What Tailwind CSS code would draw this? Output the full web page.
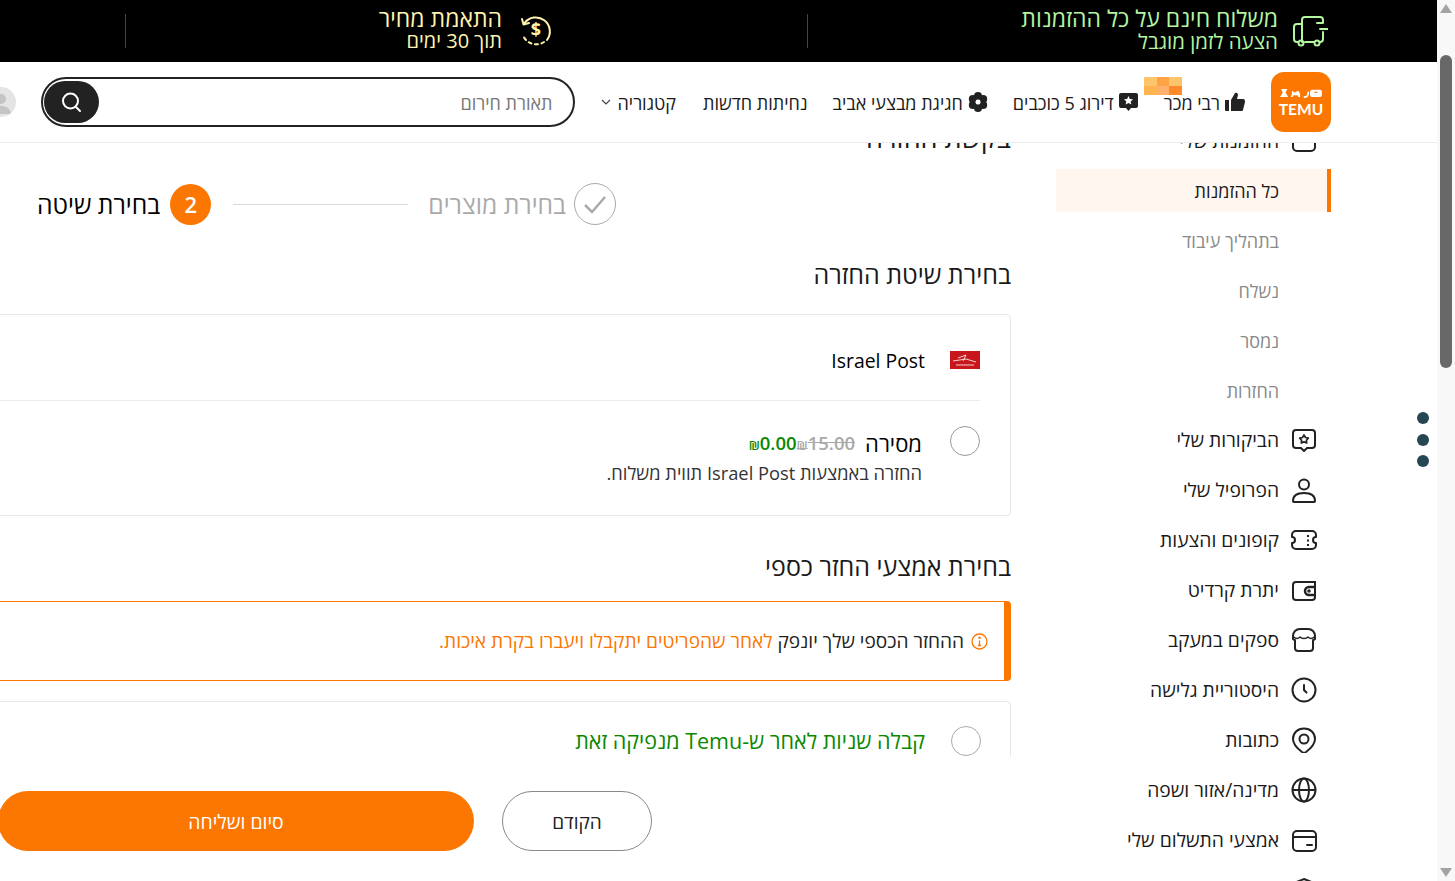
<!DOCTYPE html>
<html lang="he" dir="rtl">
<head>
    <meta charset="UTF-8" />
    <title>בקשת החזרה</title>
    <script src="https://cdn.jsdelivr.net/npm/@tailwindcss/browser@4"></script>
</head>
<body class="h-[881px] overflow-hidden bg-white text-[#1a1a1a] font-['Open_Sans','Liberation_Sans',sans-serif]">
<div class="flex h-[881px] w-[1455px]" dir="ltr">
    <div class="relative h-[881px] w-[1437px] shrink-0 overflow-hidden" dir="rtl">
        <!-- banner -->
        <div class="relative z-20 flex h-[62px] items-center bg-black pr-[109px]">
            <div class="flex w-[520px] items-center gap-[14px]">
                <svg class="mb-[2px] h-[36px] w-[36px] shrink-0" viewBox="0 0 36 36" fill="none" stroke="#b4f5a0" stroke-width="2" stroke-linecap="round" stroke-linejoin="round"><path d="M10 30V8a3 3 0 0 1 3-3h15a3 3 0 0 1 3 3v3h-6"/><path d="M28 17h8M31 20v7a3 3 0 0 1-3 3"/><path d="M10 12H5a3 3 0 0 0-3 3v12a3 3 0 0 0 3 3h1"/><path d="M13 30h9"/><circle cx="9" cy="31" r="2.500"/><circle cx="25" cy="31" r="2.500"/></svg>
                <div class="pb-[4px] whitespace-nowrap text-[#b4f5a0]">
                    <div class="text-[23px] leading-[24px]">משלוח חינם על כל ההזמנות</div>
                    <div class="text-[20.500px] leading-[22px]">הצעה לזמן מוגבל</div>
                </div>
            </div>
            <div class="h-[34px] w-px bg-[#444]"></div>
            <div class="flex w-[681px] items-center gap-[17px] pr-[254px]">
                <svg class="mb-[2px] h-[34px] w-[34px] shrink-0" viewBox="0 0 34 34" fill="none" stroke="#fff3b0" stroke-width="2" stroke-linecap="round" stroke-linejoin="round"><path d="M5.500 10A14 14 0 1 1 28 27"/><path d="M25 29A14 14 0 0 1 4 22" stroke-dasharray="3 3.500"/><path d="M3 6l1.500 5.500L10 10"/><text x="17" y="23" text-anchor="middle" font-size="18" font-weight="700" fill="#fff3b0" stroke="none">$</text></svg>
                <div class="pb-[4px] whitespace-nowrap text-[#fff3b0]">
                    <div class="text-[23px] leading-[24px]">התאמת מחיר</div>
                    <div class="text-[20px] leading-[22px]">תוך 30 ימים</div>
                </div>
            </div>
            <div class="h-[34px] w-px bg-[#444]"></div>
        </div>

        <!-- header -->
        <div class="relative z-20 flex h-[81px] items-center border-b border-[#ebebeb] bg-white pr-[106px] text-[18px] font-medium whitespace-nowrap">
            <div class="relative mb-[1px] flex h-[60px] w-[60px] shrink-0 flex-col items-center justify-center rounded-[13px] bg-[#fb7701] text-white" dir="ltr">
                <svg class="h-[10px] w-[44px]" viewBox="0 0 46 11" fill="#fff"><path d="M1 1h7L6 5l3 5H0l3-5zM13 3l3 2 4-2 2 3v4h-2l-1-2h-4l-1 2h-2l1-4zM26 9c3 0 4-1 4-5h2c0 5-2 7-6 7zM35 2h9q2 0 2 2v4q0 2-2 2h-9q-2 0-2-2V4q0-2 2-2zm2 2q2 3 5 0z"/></svg>
                <div class="mt-[4px] font-['Lato',sans-serif] text-[15.500px] leading-[14px] font-bold">TEMU</div>
            </div>
            <div class="mr-[26px] flex items-center gap-[4px]">
                <svg class="h-[20px] w-[21px]" viewBox="0 0 21 20" fill="#222"><path d="M1 8h4v11H2a1 1 0 0 1-1-1zM7 8l4-7c2-1 3 1 3 2l-1 4h6c2 0 2 2 2 3l-2 8c-.3 1-1 1-2 1H7z"/></svg>
                <span class="pt-[2px]">רבי מכר</span>
            </div>
            <div class="absolute top-[15px] right-[255px] grid h-[18px] w-[38px] grid-cols-3 grid-rows-2">
                <i class="bg-[#fec46b]"></i><i class="bg-[#ffa444]"></i><i class="bg-[#fec46b]"></i>
                <i class="bg-[#ff8a2a]"></i><i class="bg-[#ffb06c]"></i><i class="bg-[#ffb44f]"></i>
            </div>
            <div class="mr-[25px] flex items-center gap-[4px]">
                <svg class="h-[20px] w-[21px]" viewBox="0 0 21 20"><path fill="#222" d="M3 1h15a2 2 0 0 1 2 2v11a2 2 0 0 1-2 2h-5l-2.500 3L8 16H3a2 2 0 0 1-2-2V3a2 2 0 0 1 2-2z"/><path fill="#fff" d="M10.500 4l1.400 2.900 3.100.4-2.300 2.100.6 3.100-2.800-1.500-2.800 1.500.6-3.100L6 7.300l3.100-.4z"/></svg>
                <span class="pt-[2px]">דירוג 5 כוכבים</span>
            </div>
            <div class="mr-[25px] flex items-center gap-[5px]">
                <svg class="h-[20px] w-[20px]" viewBox="0 0 20 20"><g fill="#222"><circle cx="10" cy="4" r="4"/><circle cx="10" cy="16" r="4"/><circle cx="4.800" cy="7" r="4"/><circle cx="15.200" cy="7" r="4"/><circle cx="4.800" cy="13" r="4"/><circle cx="15.200" cy="13" r="4"/></g><circle cx="10" cy="10" r="2.500" fill="#fff"/></svg>
                <span class="pt-[2px]">חגיגת מבצעי אביב</span>
            </div>
            <div class="mr-[25px] pt-[2px]">נחיתות חדשות</div>
            <div class="mr-[27px] flex items-center gap-[6px]">
                <span class="pt-[2px]">קטגוריה</span>
                <svg class="h-[8px] w-[12px]" viewBox="0 0 12 8" fill="none" stroke="#444" stroke-width="1.200"><path d="M2 2l4 4 4-4"/></svg>
            </div>
            <div class="mr-[25px] flex h-[50px] w-[534px] shrink-0 items-center justify-between rounded-[25px] border-2 border-[#222] pr-[20px] pl-[1px]">
                <span class="pt-[2px] font-normal text-[#777]">תאורת חירום</span>
                <div class="flex h-[42px] w-[55px] items-center justify-center rounded-[21px] bg-[#222]">
                    <svg class="h-[24px] w-[24px]" viewBox="0 0 24 24" fill="none" stroke="#fff" stroke-width="2" stroke-linecap="round"><circle cx="11.500" cy="11" r="7.500"/><path d="M17 17l4 4"/></svg>
                </div>
            </div>
            <div class="mr-[25px] h-[30px] w-[30px] shrink-0 overflow-hidden rounded-full bg-[#e4e4e4]">
                <svg class="h-[30px] w-[30px]" viewBox="0 0 30 30" fill="#c4c4c4"><circle cx="15" cy="12" r="5"/><path d="M5 27c1-6 5-8 10-8s9 2 10 8z"/></svg>
            </div>
        </div>

        <!-- page content, scrolled -->
        <div class="-mt-[27px] flex items-start pr-[106px]">
            <!-- sidebar -->
            <div class="w-[275px] shrink-0 text-[19.300px] whitespace-nowrap">
                <div class="flex h-[50px] items-center gap-[12px] pr-[14px]">
                    <svg class="h-[26px] w-[26px] shrink-0" viewBox="0 0 26 26" fill="none" stroke="#222" stroke-width="2"><rect x="2" y="4" width="22" height="19" rx="4"/><path d="M9 12h8"/></svg>
                    <span>ההזמנות שלי</span>
                </div>
                <div class="flex h-[50px] items-center pb-[1px]">
                    <div class="flex h-[43px] w-full items-center border-r-4 border-[#fb7701] bg-[#fff6f0] pt-[2px] pr-[48px] text-[18px]">כל ההזמנות</div>
                </div>
                <div class="flex h-[50px] items-center pr-[52px] text-[18px] text-[#8a8a8a]">בתהליך עיבוד</div>
                <div class="flex h-[50px] items-center pr-[52px] text-[18px] text-[#8a8a8a]">נשלח</div>
                <div class="flex h-[50px] items-center pr-[52px] text-[18px] text-[#8a8a8a]">נמסר</div>
                <div class="flex h-[49px] items-center pt-[2px] pr-[52px] text-[18px] text-[#8a8a8a]">החזרות</div>
                <div class="flex h-[50px] items-center gap-[12px] pr-[14px]">
                    <svg class="h-[26px] w-[26px] shrink-0" viewBox="0 0 26 26" fill="none" stroke="#222" stroke-width="2" stroke-linejoin="round"><path d="M5 3h16a3 3 0 0 1 3 3v12a3 3 0 0 1-3 3h-5l-3 3-3-3H5a3 3 0 0 1-3-3V6a3 3 0 0 1 3-3z"/><path stroke-width="1.700" d="M13 8l1.500 2.500 2.800.6-1.900 2.100.3 2.800-2.700-1.100-2.700 1.100.3-2.800-1.900-2.100 2.800-.6z"/></svg>
                    <span>הביקורות שלי</span>
                </div>
                <div class="flex h-[50px] items-center gap-[12px] pr-[14px]">
                    <svg class="h-[26px] w-[26px] shrink-0" viewBox="0 0 26 26" fill="none" stroke="#222" stroke-width="2"><circle cx="13" cy="7.500" r="5"/><path d="M2 24c0-5 4-8 11-8s11 3 11 8c0 .5-.5 1-1 1H3c-.5 0-1-.5-1-1z"/></svg>
                    <span>הפרופיל שלי</span>
                </div>
                <div class="flex h-[50px] items-center gap-[12px] pr-[14px]">
                    <svg class="h-[26px] w-[26px] shrink-0" viewBox="0 0 26 26" fill="none" stroke="#222" stroke-width="2" stroke-linejoin="round"><path d="M5 4h16a4 4 0 0 1 4 4v2a3 3 0 0 0 0 6v2a4 4 0 0 1-4 4H5a4 4 0 0 1-4-4v-2a3 3 0 0 0 0-6V8a4 4 0 0 1 4-4z"/><path stroke-dasharray="2 2.500" d="M17 8v11"/></svg>
                    <span>קופונים והצעות</span>
                </div>
                <div class="flex h-[50px] items-center gap-[12px] pr-[14px]">
                    <svg class="h-[26px] w-[26px] shrink-0" viewBox="0 0 26 26" fill="none" stroke="#222" stroke-width="2"><path d="M24 5H5a3 3 0 0 0-3 3v12a3 3 0 0 0 3 3h16a3 3 0 0 0 3-3z"/><path stroke-width="2.500" d="M24 10h-6a4 4 0 0 0 0 8h6"/><circle cx="18" cy="14" r=".8"/></svg>
                    <span>יתרת קרדיט</span>
                </div>
                <div class="flex h-[50px] items-center gap-[12px] pr-[14px]">
                    <svg class="h-[26px] w-[26px] shrink-0" viewBox="0 0 26 26" fill="none" stroke="#222" stroke-width="2" stroke-linejoin="round"><path d="M2 9c0-4 3-7 7-7h8c4 0 7 3 7 7v3c-1 1-2 1-2 1v8a3 3 0 0 1-3 3H7a3 3 0 0 1-3-3v-8s-1 0-2-1z"/><path stroke-width="1.600" d="M3 10c2 2 4 2 6 0 2 2 6 2 8 0 2 2 4 2 6 0"/></svg>
                    <span>ספקים במעקב</span>
                </div>
                <div class="flex h-[50px] items-center gap-[12px] pr-[14px]">
                    <svg class="h-[26px] w-[26px] shrink-0" viewBox="0 0 26 26" fill="none" stroke="#222" stroke-width="2" stroke-linecap="round"><circle cx="13" cy="13" r="11.500"/><path d="M13 8v5l2.500 2.500"/></svg>
                    <span>היסטוריית גלישה</span>
                </div>
                <div class="flex h-[50px] items-center gap-[12px] pr-[14px]">
                    <svg class="h-[26px] w-[26px] shrink-0" viewBox="0 0 26 26" fill="none" stroke="#222" stroke-width="2" stroke-linejoin="round"><path d="M13 1.500c6.500 0 11 4.500 11 10.500 0 5-5 10-9 13a3.500 3.500 0 0 1-4 0c-4-3-9-8-9-13C2 6 6.500 1.500 13 1.500z"/><circle cx="13" cy="12" r="4.500"/></svg>
                    <span>כתובות</span>
                </div>
                <div class="flex h-[50px] items-center gap-[12px] pr-[14px]">
                    <svg class="h-[26px] w-[26px] shrink-0" viewBox="0 0 26 26" fill="none" stroke="#222" stroke-width="2"><circle cx="13" cy="13" r="11.500"/><ellipse cx="13" cy="13" rx="5" ry="11.500"/><path d="M1.500 13h23"/></svg>
                    <span>מדינה/אזור ושפה</span>
                </div>
                <div class="flex h-[50px] items-center gap-[12px] pr-[14px]">
                    <svg class="h-[26px] w-[26px] shrink-0" viewBox="0 0 26 26" fill="none" stroke="#222" stroke-width="2" stroke-linecap="round"><rect x="2" y="4" width="23" height="20" rx="4"/><path d="M2 10h23M16 18h5"/></svg>
                    <span>אמצעי התשלום שלי</span>
                </div>
                <div class="flex h-[50px] items-center gap-[12px] pr-[14px]">
                    <svg class="h-[26px] w-[26px] shrink-0" viewBox="0 0 26 26" fill="none" stroke="#222" stroke-width="2"><path d="M13 2l10 4v8c0 5-5 9-10 11C8 23 3 19 3 14V6z"/></svg>
                </div>
            </div>

            <!-- main column -->
            <div class="mr-[45px] w-[1100px] shrink-0">
                <h1 class="flex h-[44px] items-center text-[27px] font-medium">בקשת החזרה</h1>

                <div class="mt-[23px] mr-[395px] flex h-[42px] items-center">
                    <div class="flex h-[42px] w-[42px] items-center justify-center rounded-full border border-[#aaa]">
                        <svg class="h-[26px] w-[26px]" viewBox="0 0 26 26" fill="none" stroke="#aaa" stroke-width="2.500"><path d="M3 14l7 7L23 6"/></svg>
                    </div>
                    <span class="mr-[8px] pt-[2px] text-[24.700px] whitespace-nowrap text-[#aaa]">בחירת מוצרים</span>
                    <div class="mr-[20px] h-px w-[175px] bg-[#d8d8d8]"></div>
                    <div class="mr-[22px] flex h-[41px] w-[41px] items-center justify-center rounded-full bg-[#fb7701] text-[22px] font-semibold text-white">2</div>
                    <span class="mr-[10px] pt-[2px] text-[24.700px] whitespace-nowrap text-black">בחירת שיטה</span>
                </div>

                <h2 class="mt-[35px] flex h-[30px] items-center text-[25px] font-medium">בחירת שיטת החזרה</h2>

                <div class="mt-[24px] h-[202px] rounded-[4px] border border-[#e8e8e8] px-[30px]">
                    <div class="flex h-[86px] items-center gap-[25px] border-b border-[#ebebeb] pt-[4px]">
                        <div class="flex h-[18px] w-[30px] items-center justify-center bg-[#c8161d]">
                            <svg class="h-[18px] w-[30px]" viewBox="0 0 30 18" fill="none" stroke="#fff" stroke-width=".8"><path d="M3 10l13-2 10 3M8 7l8-3-3 6M6 14h18"/></svg>
                        </div>
                        <span class="pt-[3px] text-[19.400px] font-medium text-black">Israel Post</span>
                    </div>
                    <div class="flex gap-[28px] pt-[25px]">
                        <div class="h-[30px] w-[30px] shrink-0 rounded-full border border-[#999]"></div>
                        <div>
                            <div class="flex h-[34px] items-center text-black">
                                <span class="text-[22px] font-medium">מסירה</span>
                                <span class="mr-[10px] text-[18.500px] font-semibold text-[#aaa] line-through" dir="ltr"><span class="text-[13px]">₪</span>15.00</span>
                                <span class="text-[18.500px] font-semibold text-[#0a8800]" dir="ltr"><span class="text-[13px]">₪</span>0.00</span>
                            </div>
                            <p class="text-[18.300px] leading-[26px] text-[#333]">החזרה באמצעות Israel Post תווית משלוח.</p>
                        </div>
                    </div>
                </div>

                <h2 class="mt-[35px] flex h-[30px] items-center pt-[1px] text-[25px] font-medium">בחירת אמצעי החזר כספי</h2>

                <div class="mt-[20px] flex h-[80px] items-center gap-[7px] rounded-[4px] border border-r-[7px] border-[#fb7701] pr-[16px] text-[19.100px]">
                    <svg class="h-[17px] w-[17px] shrink-0" viewBox="0 0 17 17" fill="none" stroke="#fb7701" stroke-width="1.300"><circle cx="8.500" cy="8.500" r="7.500"/><path d="M8.500 7.500v5M6.800 12.500h3.400" /><circle cx="8.500" cy="4.800" r=".6"/></svg>
                    <p><span class="text-[#222]">ההחזר הכספי שלך יונפק</span> <span class="text-[#fb7701]">לאחר שהפריטים יתקבלו ויעברו בקרת איכות.</span></p>
                </div>

                <div class="mt-[20px] flex h-[150px] gap-[26px] rounded-[4px] border border-[#e8e8e8] pt-[24px] pr-[29px]">
                    <div class="h-[30px] w-[30px] shrink-0 rounded-full border border-[#aaa]"></div>
                    <span class="text-[21.500px] leading-[30px] text-[#0a8800]">קבלה שניות לאחר ש-Temu מנפיקה זאת</span>
                </div>
            </div>
        </div>

        <!-- sticky action bar -->
        <div class="absolute right-[426px] bottom-0 z-10 flex h-[124px] w-[1100px] items-start gap-[28px] bg-white pt-[34px] pr-[359px]">
            <button class="h-[60px] w-[150px] shrink-0 rounded-[30px] border border-[#888] bg-white pt-[2px] text-[19px] font-medium text-[#222]">הקודם</button>
            <button class="h-[60px] w-[476px] shrink-0 rounded-[30px] bg-[#fb7701] pt-[2px] text-[19.400px] font-medium text-white">סיום ושליחה</button>
        </div>

        <!-- floating dots -->
        <div class="absolute top-[412px] right-[8px] z-10 flex flex-col gap-[9.500px]">
            <div class="h-[12px] w-[12px] rounded-full bg-[#264653]"></div>
            <div class="h-[12px] w-[12px] rounded-full bg-[#264653]"></div>
            <div class="h-[12px] w-[12px] rounded-full bg-[#264653]"></div>
        </div>
    </div>

    <!-- scrollbar -->
    <div class="flex h-[881px] w-[18px] shrink-0 flex-col items-center bg-[#f8f8f8]">
        <svg class="mt-[4px] h-[9px] w-[12px]" viewBox="0 0 12 9" fill="#a3a3a3"><path d="M6 0l6 9H0z"/></svg>
        <div class="mt-[42px] h-[313px] w-[12px] rounded-[6px] bg-[#686868]"></div>
        <svg class="mt-[500px] h-[9px] w-[12px]" viewBox="0 0 12 9" fill="#a3a3a3"><path d="M6 9L0 0h12z"/></svg>
    </div>
</div>
</body>
</html>
